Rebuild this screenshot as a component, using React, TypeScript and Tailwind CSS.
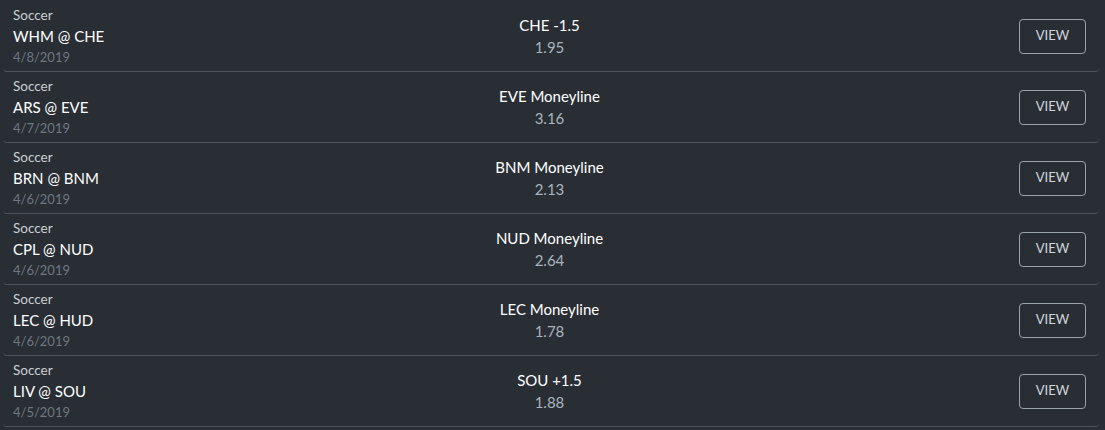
const bets = [
  { sport: "Soccer", match: "WHM @ CHE", date: "4/8/2019", pick: "CHE -1.5", odds: "1.95" },
  { sport: "Soccer", match: "ARS @ EVE", date: "4/7/2019", pick: "EVE Moneyline", odds: "3.16" },
  { sport: "Soccer", match: "BRN @ BNM", date: "4/6/2019", pick: "BNM Moneyline", odds: "2.13" },
  { sport: "Soccer", match: "CPL @ NUD", date: "4/6/2019", pick: "NUD Moneyline", odds: "2.64" },
  { sport: "Soccer", match: "LEC @ HUD", date: "4/6/2019", pick: "LEC Moneyline", odds: "1.78" },
  { sport: "Soccer", match: "LIV @ SOU", date: "4/5/2019", pick: "SOU +1.5", odds: "1.88" },
];

export default function App() {
  return (
    <div className="min-h-[430px] w-full bg-[#292e35] pl-[3px] pr-[6px] pt-px font-['Lato','Liberation_Sans',sans-serif]">
      {bets.map((b) => (
        <div
          key={b.match}
          className="grid h-[71px] grid-cols-3 items-center rounded-[4px] border-b border-[#4e545b] pl-[10px] pr-[13px]"
        >
          <div className="flex flex-col">
            <span className="text-[13.5px] leading-[20px] text-[#c9ced3]">{b.sport}</span>
            <span className="text-[15px] leading-[22px] text-white">{b.match}</span>
            <span className="text-[13px] leading-[20px] text-[#6f7780]">{b.date}</span>
          </div>
          <div className="flex flex-col items-center">
            <span className="text-[15px] leading-[22px] text-white">{b.pick}</span>
            <span className="text-[15px] leading-[22px] text-[#aab4be]">{b.odds}</span>
          </div>
          <div className="flex justify-end">
            <button
              type="button"
              className="flex h-[35px] w-[67px] items-center justify-center rounded-[4px] border border-[#9aa2aa] text-[13px] text-[#d0d6dc]"
            >
              VIEW
            </button>
          </div>
        </div>
      ))}
    </div>
  );
}
